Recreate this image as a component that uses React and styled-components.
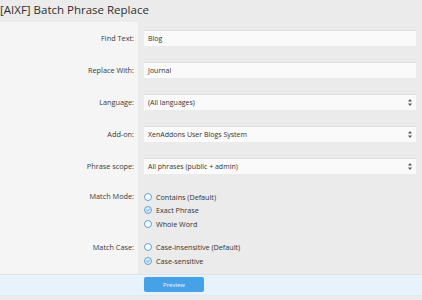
import React from "react";
import styled, { createGlobalStyle } from "styled-components";

const Global = createGlobalStyle`
  html, body { margin: 0; padding: 0; background: #ebebeb; }
  body { font-family: "Open Sans", "Noto Sans", sans-serif; color: #333; }
`;

const Page = styled.div`
  width: 422px;
  height: 300px;
  background: #ebebeb;
  overflow: hidden;
`;

const Title = styled.h1`
  margin: 0;
  height: 22px;
  font-size: 11.5px;
  font-weight: 400;
  line-height: 20px;
  color: #2f2f2f;
`;

const Form = styled.div`
  display: grid;
  grid-template-columns: 138px 1fr;
`;

const Label = styled.div`
  background: #f5f5f5;
  text-align: right;
  padding: ${(p) => (p.$top ? "8px 4px 0 0" : "8px 4px 8px 0")};
  font-size: 7.3px;
  line-height: ${(p) => (p.$top ? "13.5px" : "16px")};
  color: #3a3a3a;
`;

const Field = styled.div`
  padding: ${(p) => p.$pad || "8px 6px 8px 6px"};
`;

const Input = styled.div`
  height: 16px;
  box-sizing: border-box;
  background: #fafafa;
  border-top: 1px solid #dcdcdc;
  padding: 0 4px;
  font-size: 7px;
  line-height: 15px;
  color: #333;
  display: flex;
  align-items: center;
  justify-content: space-between;
`;

const Arrows = () => (
  <svg width="4" height="7" viewBox="0 0 4 7">
    <path d="M2 0 L4 2.6 L0 2.6 Z M2 7 L4 4.4 L0 4.4 Z" fill="#555" />
  </svg>
);

const RadioRow = styled.div`
  display: flex;
  align-items: center;
  gap: 4px;
  height: 13.5px;
  font-size: 7.2px;
  color: #333;
`;

const Circle = styled.span`
  width: 8px;
  height: 8px;
  box-sizing: border-box;
  border-radius: 50%;
  border: 1px solid #5ea4de;
  background: ${(p) => (p.$on ? "#dcebf8" : "#fafafa")};
  display: flex;
  align-items: center;
  justify-content: center;
`;

const Radio = ({ on, children }) => (
  <RadioRow>
    <Circle $on={on}>
      {on && (
        <svg width="6" height="6" viewBox="0 0 6 6">
          <path d="M1.3 3.1 L2.5 4.2 L4.7 1.8" fill="none" stroke="#4a94d6" strokeWidth="0.9" />
        </svg>
      )}
    </Circle>
    {children}
  </RadioRow>
);

const Footer = styled.div`
  border-top: 1px solid #dfe3e6;
  background: #e8f2fb;
  height: 22px;
  box-sizing: border-box;
  display: grid;
  grid-template-columns: 138px 1fr;
  align-items: center;
  border-bottom: 1px solid #e3e8ec;
`;

const Button = styled.button`
  grid-column: 2;
  margin-left: 6px;
  width: 60px;
  height: 15px;
  border: none;
  border-radius: 2px;
  background: #47a1e6;
  color: #f2f8fd;
  font-family: inherit;
  font-size: 6px;
  padding: 0;
`;

const rows = [
  ["Find Text:", "Blog", false],
  ["Replace With:", "Journal", false],
  ["Language:", "(All languages)", true],
  ["Add-on:", "XenAddons User Blogs System", true],
  ["Phrase scope:", "All phrases (public + admin)", true],
];

export default function App() {
  return (
    <Page>
      <Global />
      <Title>[AIXF] Batch Phrase Replace</Title>
      <Form>
        {rows.map(([l, v, sel]) => (
          <React.Fragment key={l}>
            <Label>{l}</Label>
            <Field>
              <Input>
                <span>{v}</span>
                {sel && <Arrows />}
              </Input>
            </Field>
          </React.Fragment>
        ))}
        <Label $top>Match Mode:</Label>
        <Field $pad="8px 6px 2px 6px">
          <Radio>Contains (Default)</Radio>
          <Radio on>Exact Phrase</Radio>
          <Radio>Whole Word</Radio>
        </Field>
        <Label $top>Match Case:</Label>
        <Field $pad="8px 6px 6px 6px">
          <Radio>Case-insensitive (Default)</Radio>
          <Radio on>Case-sensitive</Radio>
        </Field>
      </Form>
      <Footer>
        <Button>Preview</Button>
      </Footer>
    </Page>
  );
}
